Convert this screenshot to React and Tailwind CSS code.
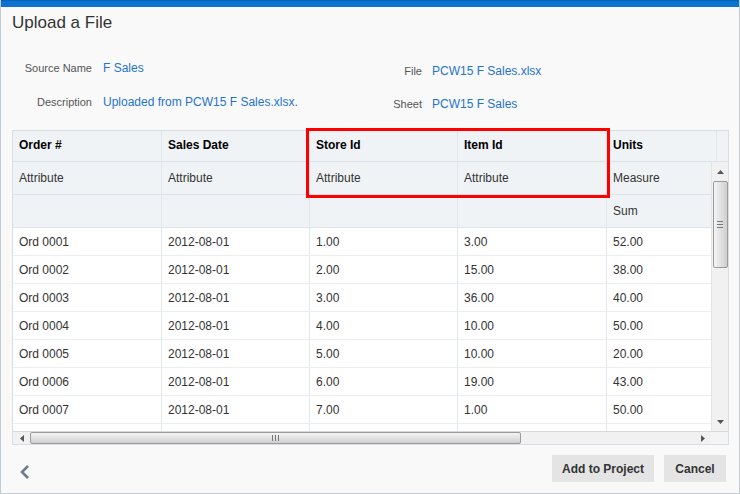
import React from "react";

const rows = [
  ["Ord 0001", "2012-08-01", "1.00", "3.00", "52.00"],
  ["Ord 0002", "2012-08-01", "2.00", "15.00", "38.00"],
  ["Ord 0003", "2012-08-01", "3.00", "36.00", "40.00"],
  ["Ord 0004", "2012-08-01", "4.00", "10.00", "50.00"],
  ["Ord 0005", "2012-08-01", "5.00", "10.00", "20.00"],
  ["Ord 0006", "2012-08-01", "6.00", "19.00", "43.00"],
  ["Ord 0007", "2012-08-01", "7.00", "1.00", "50.00"],
];

const widths = ["w-[149px]", "w-[148px]", "w-[148px]", "w-[149px]", "w-[110px]"];

const Row = ({ cells, className, cellClass }) => (
  <div className={"flex shrink-0 " + className}>
    {cells.map((c, i) => (
      <div
        key={i}
        className={
          "shrink-0 flex items-center pl-[6px] border-r border-[#e1e6ec] " + widths[i] + " " + cellClass
        }
      >
        {c}
      </div>
    ))}
  </div>
);

const App = () => {
  return (
    <div
      className="w-[740px] h-[494px] bg-[#f9f9f9] border-l border-r border-b border-[#c3cbd4] relative overflow-hidden text-[#333]"
      style={{ fontFamily: "'Liberation Sans', Arial, sans-serif" }}
    >
      {/* top blue bar */}
      <div className="h-[7px] bg-[#0a72cf] border-t border-[#0862b4]" />

      {/* title */}
      <h1 className="pl-[11px] pt-[6px] text-[17px] leading-[20px] text-[#333]">Upload a File</h1>

      {/* form */}
      <div className="flex mt-[25px] h-[72px]">
        <div className="w-[330px] flex flex-col">
          <div className="flex items-center h-[16px] mt-[2px]">
            <span className="w-[91px] text-right text-[11px] text-[#555]">Source Name</span>
            <span className="ml-[11px] text-[12px] text-[#1f74cb]">F Sales</span>
          </div>
          <div className="flex items-center h-[16px] mt-[18px]">
            <span className="w-[91px] text-right text-[11px] text-[#555]">Description</span>
            <span className="ml-[11px] text-[12px] text-[#1f74cb]">Uploaded from PCW15 F Sales.xlsx.</span>
          </div>
        </div>
        <div className="flex flex-col">
          <div className="flex items-center h-[16px] mt-[5px]">
            <span className="w-[91px] text-right text-[11px] text-[#555]">File</span>
            <span className="ml-[10px] text-[12px] text-[#1f74cb]">PCW15 F Sales.xlsx</span>
          </div>
          <div className="flex items-center h-[16px] mt-[17px]">
            <span className="w-[91px] text-right text-[11px] text-[#555]">Sheet</span>
            <span className="ml-[10px] text-[12px] text-[#1f74cb]">PCW15 F Sales</span>
          </div>
        </div>
      </div>

      {/* table */}
      <div className="relative ml-[11px] w-[717px] border border-[#d8dee5] bg-[#f0f3f6] text-[12px]">
        <div className="flex h-[31px] border-b border-[#dde3ea]">
          <Row
            cells={["Order #", "Sales Date", "Store Id", "Item Id", "Units"]}
            className="h-[31px]"
            cellClass="font-bold text-black pb-[3px]"
          />
        </div>
        <div className="flex">
          <div className="w-[698px] h-[269px] overflow-hidden flex flex-col">
            <Row
              cells={["Attribute", "Attribute", "Attribute", "Attribute", "Measure"]}
              className="h-[33px] border-b border-[#dde3ea]"
              cellClass="text-[#333]"
            />
            <Row
              cells={["", "", "", "", "Sum"]}
              className="h-[33px] border-b border-[#dde3ea]"
              cellClass="text-[#333]"
            />
            {rows.map((r, i) => (
              <Row
                key={i}
                cells={r}
                className="h-[28px] bg-white border-b border-[#eceff2]"
                cellClass="text-[#333]"
              />
            ))}
            <Row cells={["", "", "", "", ""]} className="h-[28px] bg-white" cellClass="" />
          </div>
          {/* vertical scrollbar */}
          <div className="w-[17px] h-[269px] bg-[#f1f1f1] border-l border-[#e4e4e4] flex flex-col items-center">
            <div className="h-[19px] flex items-center justify-center text-[#606060]">
              <svg width="7" height="4" viewBox="0 0 7 4"><path d="M0 4 L3.5 0 L7 4 Z" fill="#555" /></svg>
            </div>
            <div className="w-[15px] h-[87px] rounded-[2px] border border-[#9a9a9a] bg-gradient-to-r from-[#f4f4f4] via-[#e2e2e2] to-[#cfcfcf] flex flex-col items-center justify-center gap-[2px]">
              <div className="w-[6px] h-px bg-[#777]" />
              <div className="w-[6px] h-px bg-[#777]" />
              <div className="w-[6px] h-px bg-[#777]" />
            </div>
            <div className="flex-1" />
            <div className="h-[18px] flex items-center justify-center">
              <svg width="7" height="4" viewBox="0 0 7 4"><path d="M0 0 L3.5 4 L7 0 Z" fill="#555" /></svg>
            </div>
          </div>
        </div>
        {/* horizontal scrollbar */}
        <div className="flex h-[13px] border-t border-[#d8d8d8]">
          <div className="w-[698px] bg-[#f1f1f1] flex items-center">
            <div className="w-[17px] flex justify-center">
              <svg width="4" height="7" viewBox="0 0 4 7"><path d="M4 0 L0 3.5 L4 7 Z" fill="#555" /></svg>
            </div>
            <div className="w-[491px] h-[12px] rounded-[2px] border border-[#9a9a9a] bg-gradient-to-b from-[#f4f4f4] via-[#e2e2e2] to-[#cfcfcf] flex items-center justify-center gap-[2px]">
              <div className="w-px h-[6px] bg-[#777]" />
              <div className="w-px h-[6px] bg-[#777]" />
              <div className="w-px h-[6px] bg-[#777]" />
            </div>
            <div className="flex-1" />
            <div className="w-[17px] flex justify-center">
              <svg width="4" height="7" viewBox="0 0 4 7"><path d="M0 0 L4 3.5 L0 7 Z" fill="#555" /></svg>
            </div>
          </div>
          <div className="w-[17px] bg-[#f4f4f4]" />
        </div>

        {/* highlight */}
        <div className="absolute left-[293px] top-[-3px] w-[304px] h-[70px] border-[3px] border-[#ff0000]" />
      </div>

      {/* footer */}
      <div className="flex items-center mt-[10px] pl-[18px] pr-[13px]">
        <svg width="12" height="16" viewBox="0 0 12 16" className="mt-[6px]">
          <path d="M9 2 L3 8 L9 14" stroke="#6d7c8d" strokeWidth="2.6" fill="none" />
        </svg>
        <div className="flex-1" />
        <button className="h-[27px] px-[10px] bg-[#e4e4e4] text-[12px] font-bold text-[#333]">Add to Project</button>
        <button className="ml-[10px] h-[27px] w-[62px] bg-[#e4e4e4] text-[12px] font-bold text-[#333]">Cancel</button>
      </div>
    </div>
  );
};

export default App;
